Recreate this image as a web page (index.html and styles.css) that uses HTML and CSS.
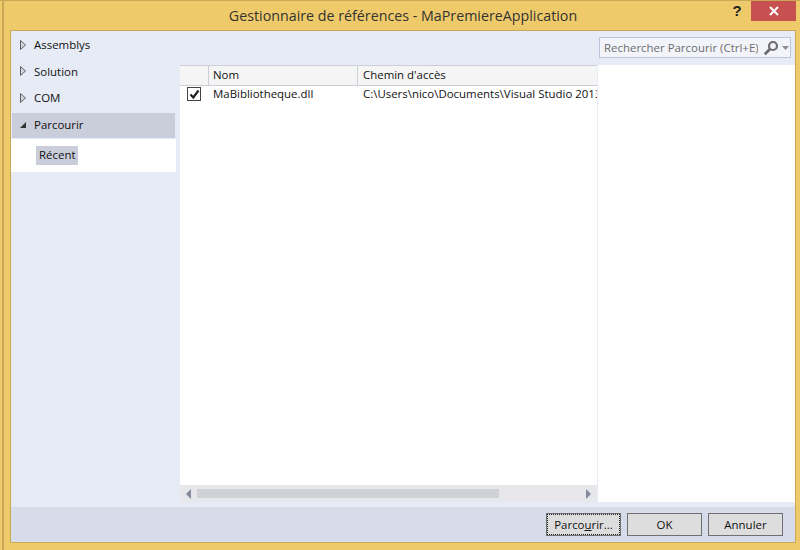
FILE: index.html
```html
<!DOCTYPE html>
<html lang="fr">
<head>
<meta charset="utf-8">
<title>Gestionnaire de références</title>
<link rel="stylesheet" href="styles.css">
</head>
<body>
<div class="window">
  <header class="titlebar">
    <h1 class="title">Gestionnaire de références - MaPremiereApplication</h1>
    <div class="controls">
      <span class="help">?</span>
      <span class="close"><svg width="10" height="10" viewBox="0 0 10 10"><path d="M1 1 9 9M9 1 1 9" stroke="#fff" stroke-width="2"/></svg></span>
    </div>
  </header>
  <div class="client">
    <div class="content">
      <nav class="nav">
        <div class="nav-item"><svg class="arrow" width="8" height="10" viewBox="0 0 8 10"><path d="M1.5 .5 6.5 5 1.5 9.5Z" fill="#d5d6dc" stroke="#5f5f63"/></svg>Assemblys</div>
        <div class="nav-item"><svg class="arrow" width="8" height="10" viewBox="0 0 8 10"><path d="M1.5 .5 6.5 5 1.5 9.5Z" fill="#d5d6dc" stroke="#5f5f63"/></svg>Solution</div>
        <div class="nav-item"><svg class="arrow" width="8" height="10" viewBox="0 0 8 10"><path d="M1.5 .5 6.5 5 1.5 9.5Z" fill="#d5d6dc" stroke="#5f5f63"/></svg>COM</div>
        <div class="nav-item selected"><svg class="arrow" width="8" height="10" viewBox="0 0 8 10"><path d="M7 2V8H1Z" fill="#333"/></svg>Parcourir</div>
        <div class="subnav"><span class="sub-item">Récent</span></div>
      </nav>
      <main class="main">
        <div class="search-row">
          <div class="search">
            <span class="search-text">Rechercher Parcourir (Ctrl+E)</span>
            <svg class="search-icon" width="16" height="16" viewBox="0 0 16 16"><circle cx="10" cy="6" r="4" fill="none" stroke="#6d6d70" stroke-width="2.2"/><path d="M7 9 1.8 14.2" stroke="#6d6d70" stroke-width="2.8"/></svg>
            <svg class="drop" width="7" height="4" viewBox="0 0 7 4"><path d="M0 0H7L3.5 4Z" fill="#8a8d94"/></svg>
          </div>
        </div>
        <div class="panels">
          <section class="list">
            <div class="head">
              <div class="col-check"></div>
              <div class="col-name">Nom</div>
              <div class="col-path">Chemin d'accès</div>
            </div>
            <div class="row">
              <div class="cell-check"><span class="checkbox"><svg width="11" height="11" viewBox="0 0 11 11"><path d="M1.5 5.5 4.3 8.5 9.5 1.5" fill="none" stroke="#222" stroke-width="2.2"/></svg></span></div>
              <div class="cell-name">MaBibliotheque.dll</div>
              <div class="cell-path">C:\Users\nico\Documents\Visual Studio 2013</div>
            </div>
            <div class="scrollbar">
              <svg width="6" height="10" viewBox="0 0 6 10"><path d="M5 0V10L0 5Z" fill="#868999"/></svg>
              <div class="track"><div class="thumb"></div></div>
              <svg width="6" height="10" viewBox="0 0 6 10"><path d="M1 0V10L6 5Z" fill="#868999"/></svg>
            </div>
          </section>
          <aside class="details"></aside>
        </div>
      </main>
    </div>
    <footer class="footer">
      <button class="btn focused">Parco<u>u</u>rir...</button>
      <button class="btn">OK</button>
      <button class="btn">Annuler</button>
    </footer>
  </div>
</div>
</body>
</html>
```
FILE: styles.css
```css
* { box-sizing: border-box; }
html, body { margin: 0; padding: 0; }
body { width: 800px; height: 550px; overflow: hidden; font-family: "Open Sans", "Noto Sans", sans-serif; font-size: 11.45px; color: #111; }
.window { width: 800px; height: 550px; display: flex; flex-direction: column; background: linear-gradient(90deg, #efca6a 2px, #c9a956 2px, #c9a956 4px, #efca6a 4px); border-top: 1px solid #c9a956; padding: 0 4px 7px 10px; }
.titlebar { height: 29px; flex: none; display: flex; align-items: flex-start; position: relative; }
.title { margin: 7px 0 0; width: 100%; text-align: center; font-size: 14.25px; line-height: 16px; font-weight: 400; color: #333; }
.controls { position: absolute; right: 0; top: 0; display: flex; align-items: flex-start; }
.help { width: 14px; margin-right: 7px; font: bold 15px/20px "Liberation Sans", sans-serif; color: #222; text-align: center; }
.close { width: 45px; height: 20px; background: #c75050; display: flex; align-items: center; justify-content: center; }
.client { flex: 1; min-height: 0; display: flex; flex-direction: column; border: 1px solid #c9a956; background: #e6ebf5; }
.content { flex: 1; min-height: 0; display: flex; }
.nav { width: 169px; flex: none; padding-top: 0.5px; }
.nav-item { height: 26.5px; margin: 0 5px 0 1px; padding-left: 7px; display: flex; align-items: center; }
.arrow { margin-right: 7px; flex: none; }
.nav-item.selected { height: 25px; background: #cacdda; margin-top: 1.5px; padding-bottom: 1px; }
.subnav { margin: 1px 0 0 0; height: 33px; width: 165px; background: #fff; padding: 7px 0 0 25px; }
.sub-item { display: inline-block; height: 19px; line-height: 18px; background: #cacdda; padding: 0 3px; }
.main { flex: 1; min-width: 0; display: flex; flex-direction: column; padding-bottom: 5px; }
.search-row { height: 34px; flex: none; display: flex; justify-content: flex-end; padding: 6px 4px 0 0; }
.search { width: 192px; height: 21px; background: #f2f4f9; border: 1px solid #bcc5d8; display: flex; align-items: center; padding-left: 4px; color: #6d6d70; }
.search-text { width: 154px; white-space: nowrap; overflow: hidden; flex: none; }
.search-icon { margin-left: 5px; flex: none; }
.drop { margin-left: 3px; flex: none; }
.panels { flex: 1; min-height: 0; display: flex; }
.list { width: 418px; flex: none; background: #fff; border-right: 1px solid #e6ebf5; display: flex; flex-direction: column; }
.head { height: 21px; flex: none; display: flex; background: #f5f5f5; border-top: 1px solid #ccced9; border-bottom: 1px solid #ccced9; line-height: 18px; }
.col-check { width: 29px; flex: none; border-right: 1px solid #ccced9; }
.col-name { width: 149px; flex: none; padding-left: 4px; border-right: 1px solid #ccced9; }
.col-path { flex: 1; padding-left: 5px; }
.row { flex: 1; min-height: 0; display: flex; align-items: flex-start; overflow: hidden; line-height: 16px; }
.cell-check { width: 29px; flex: none; padding: 1px 0 0 7px; }
.checkbox { display: flex; width: 14px; height: 14px; border: 1px solid #444; background: #fff; align-items: center; justify-content: center; }
.cell-name { width: 149px; flex: none; padding-left: 4px; white-space: nowrap; }
.cell-path { flex: 1; min-width: 0; padding-left: 5px; white-space: nowrap; overflow: hidden; }
.scrollbar { height: 17px; flex: none; background: #e8e8ec; display: flex; align-items: center; padding: 0 6px; }
.track { flex: 1; padding: 0 6px 0 5px; }
.thumb { width: 302px; height: 9px; background: #d0d1d7; }
.details { flex: 1; background: #fff; }
.footer { height: 35px; flex: none; background: #d6dce9; display: flex; justify-content: flex-end; gap: 6px; padding: 6px 12px 0 0; }
.btn { width: 75px; height: 23px; padding: 0 0 1px; background: #dddddd; border: 1px solid #707070; font: inherit; color: #111; }
.btn.focused { outline: 1px dotted #222; outline-offset: -2px; }
```
